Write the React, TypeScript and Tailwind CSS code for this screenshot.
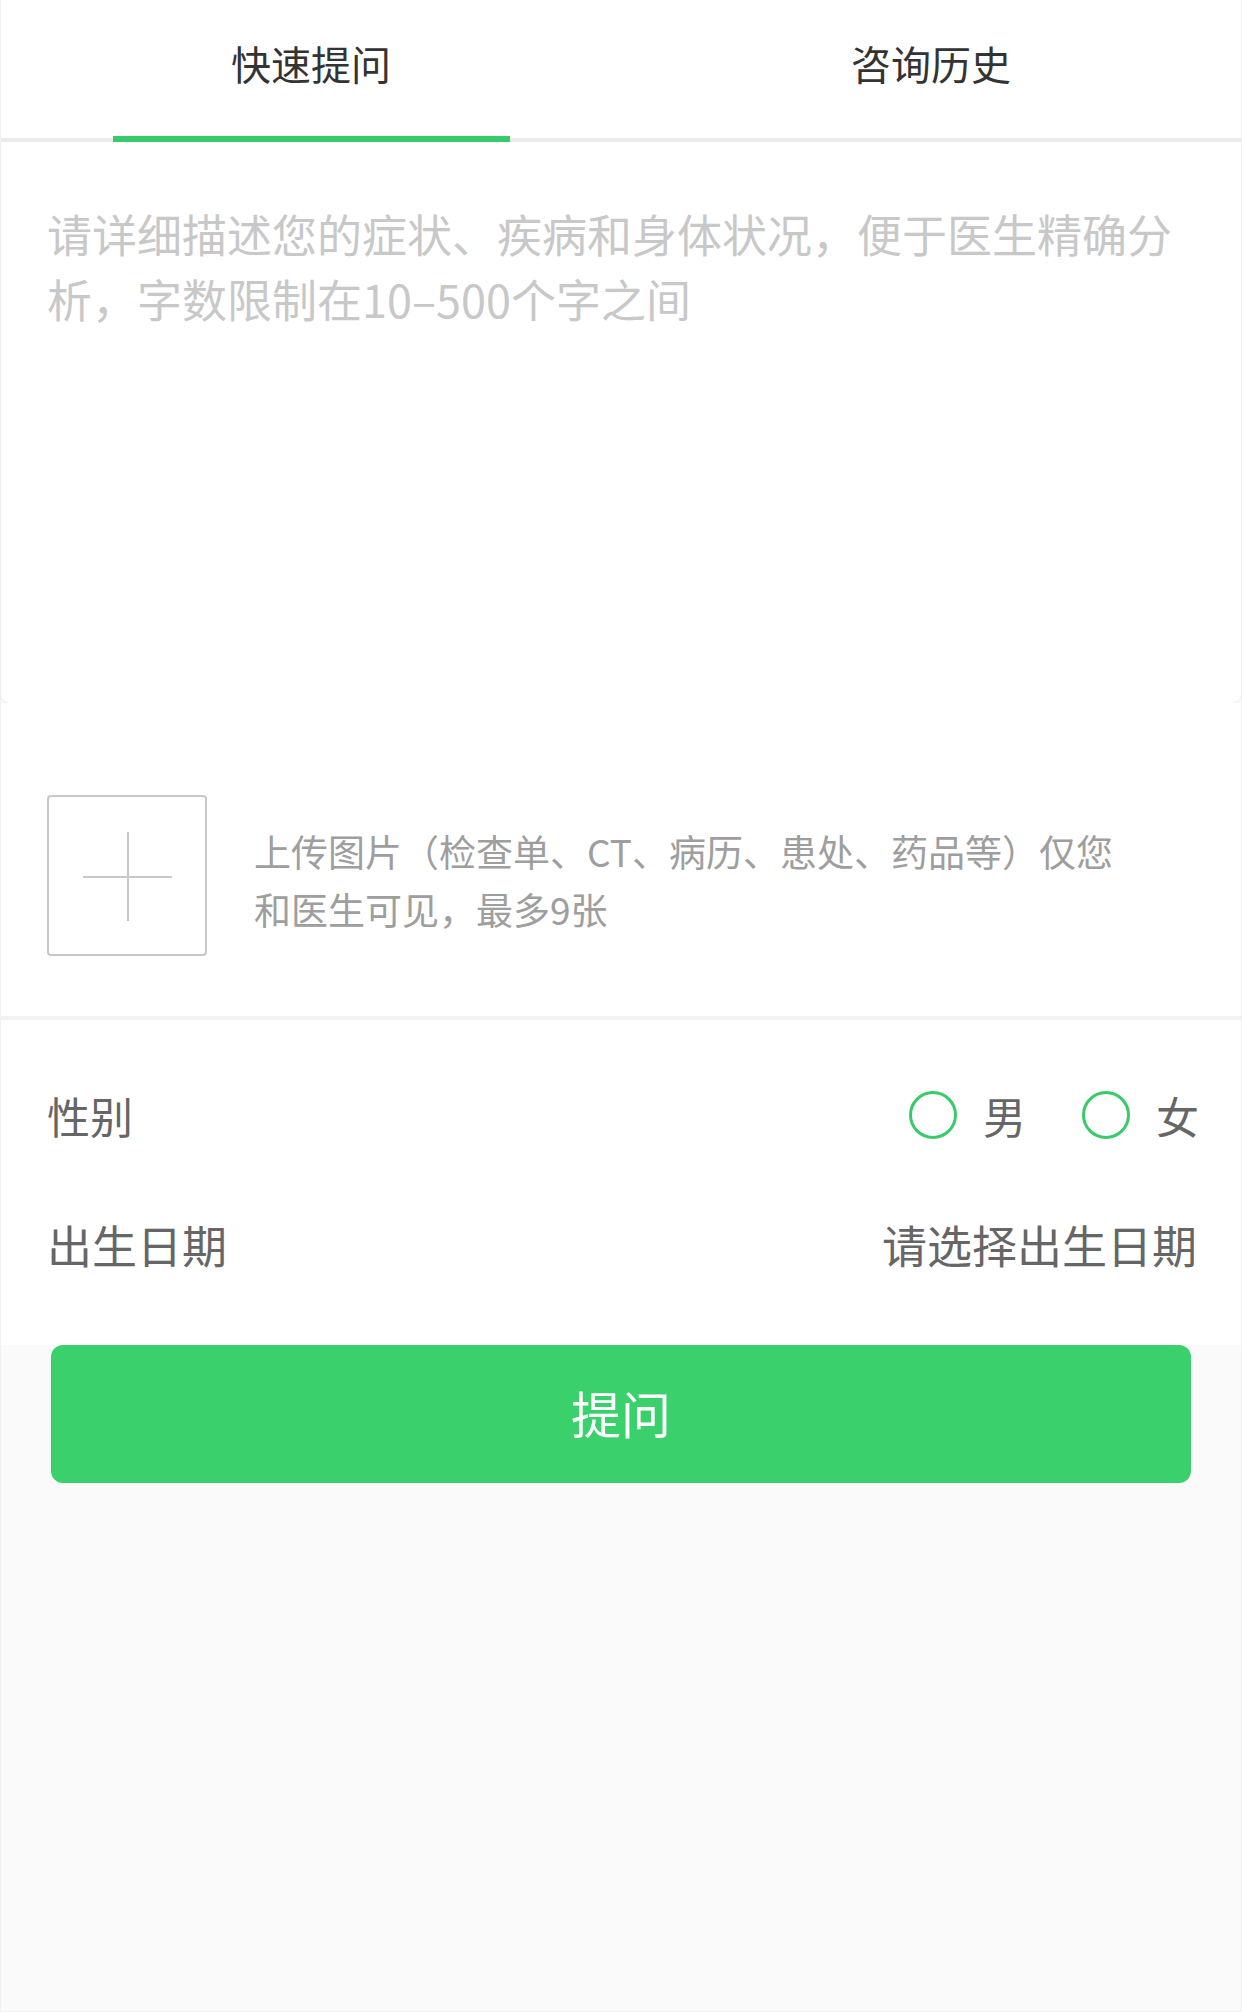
import React from "react";

const font = { fontFamily: '"Noto Sans CJK SC", "Noto Sans", sans-serif' };

export default function App() {
  return (
    <div
      style={font}
      className="w-[1242px] min-h-[2012px] bg-[#fafafa] flex flex-col border-x border-b border-[#f0f0f0]"
    >
      {/* Tabs */}
      <div className="relative bg-white border-b-4 border-[#ebebeb]">
        <div className="flex h-[138px] pb-[12px]">
          <div className="flex-1 flex items-center justify-center text-[40px] text-[#333333]">
            快速提问
          </div>
          <div className="flex-1 flex items-center justify-center text-[40px] text-[#333333]">
            咨询历史
          </div>
        </div>
        <div className="absolute left-[112px] bottom-[-4px] w-[397px] h-[6px] bg-[#37cc69]" />
      </div>

      {/* Textarea */}
      <div className="bg-white h-[561px] rounded-b-[10px] shadow-[0_2px_3px_rgba(0,0,0,0.04)] px-[46px] pt-[59px]">
        <p className="text-[45px] leading-[65px] text-[#c8c8c8] m-0">
          请详细描述您的症状、疾病和身体状况，便于医生精确分析，字数限制在10–500个字之间
        </p>
      </div>

      {/* Upload */}
      <div className="bg-white h-[313px] flex items-center pl-[46px] pt-[32px]">
        <div className="w-[160px] h-[161px] border-2 border-[#c8c8c8] rounded-[4px] relative shrink-0">
          <div className="absolute left-[34px] top-[79px] w-[89px] h-[2px] bg-[#c8c8c8]" />
          <div className="absolute left-[78px] top-[35px] w-[2px] h-[89px] bg-[#c8c8c8]" />
        </div>
        <p className="ml-[47px] mt-[8px] w-[880px] text-[37px] leading-[58px] text-[#9e9e9e] m-0">
          上传图片（检查单、CT、病历、患处、药品等）仅您和医生可见，最多9张
        </p>
      </div>

      <div className="h-[4px] bg-[#f2f2f2]" />

      {/* Form rows */}
      <div className="bg-white pt-[30px] pb-[35px] pl-[46px] pr-[42px]">
        <div className="h-[130px] flex items-center justify-between">
          <span className="text-[43px] text-[#666666]">性别</span>
          <div className="flex items-center">
            <span className="w-[48px] h-[48px] rounded-full border-[3px] border-[#37cc69]" />
            <span className="ml-[26px] text-[43px] text-[#666666]">男</span>
            <span className="ml-[56px] w-[48px] h-[48px] rounded-full border-[3px] border-[#37cc69]" />
            <span className="ml-[26px] text-[43px] text-[#666666]">女</span>
          </div>
        </div>
        <div className="h-[130px] flex items-center justify-between">
          <span className="text-[45px] text-[#666666]">出生日期</span>
          <span className="text-[45px] text-[#666666] mr-[2px]">请选择出生日期</span>
        </div>
      </div>

      {/* Button */}
      <div className="px-[50px]">
        <button className="w-full h-[138px] rounded-[12px] bg-[#3ad06c] text-white text-[50px] flex items-center justify-center pb-[4px]">
          提问
        </button>
      </div>
    </div>
  );
}
